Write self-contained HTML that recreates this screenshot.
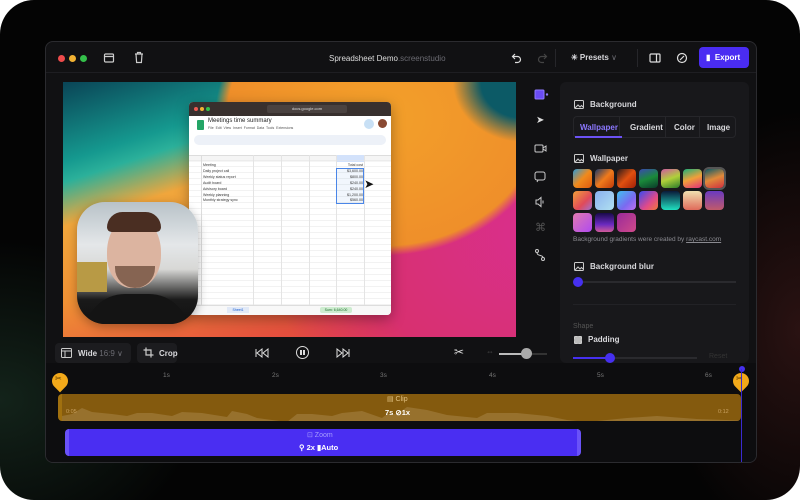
<!DOCTYPE html>
<html><head><meta charset="utf-8"><style>
*{box-sizing:border-box;margin:0;padding:0}
body{width:800px;height:500px;background:#fff;font-family:"Liberation Sans",sans-serif;overflow:hidden;position:relative}
.frame{position:absolute;left:0;top:0;width:800px;height:500px;border-radius:34px;overflow:hidden;
background:radial-gradient(ellipse 200px 160px at 0px 400px,#13231a 0%,rgba(0,0,0,0) 100%),radial-gradient(ellipse 140px 220px at 800px 330px,#2a1212 0%,rgba(0,0,0,0) 100%),#040404}
.win{position:absolute;left:45px;top:41px;width:712px;height:422px;background:#111113;border:1px solid #2b2b2f;border-radius:8px;overflow:hidden}
.abs{position:absolute}
.t{color:#d8d8dc;font-size:8px;font-weight:bold}
.dim{color:#6b6b72}
.canvas{left:17px;top:40px;width:453px;height:255px;overflow:hidden;
background:
radial-gradient(ellipse 70px 60px at 460px 0px,#0c5a66 0%,#0c5a66 60%,rgba(12,90,102,0) 100%),
radial-gradient(ellipse 200px 165px at 320px 35px,#f3a02a 0%,#ef8f2a 78%,rgba(238,141,42,0) 84%),
radial-gradient(ellipse 280px 230px at 480px 150px,#d92f8e 0%,#d83070 65%,rgba(216,48,112,0) 100%),
linear-gradient(162deg,#0a4456 0%,#15998f 20%,#2bb09a 25%,#f0a63c 36%,#ef9034 55%,#e5503e 80%,#d9343c 100%)}
.panel{left:514px;top:40px;width:189px;height:281px;background:#18181b;border-radius:6px}
.sw{position:absolute;width:19px;height:19px;border-radius:4px}
</style></head><body>
<div class="frame">
<div class="win">
 <div class="abs" style="left:0;top:0;width:712px;height:31px;border-bottom:1px solid #1e1e22"></div>
 <div class="abs" style="left:12px;top:13px;width:7px;height:7px;border-radius:50%;background:#ee4b4b"></div>
 <div class="abs" style="left:23px;top:13px;width:7px;height:7px;border-radius:50%;background:#f2b233"></div>
 <div class="abs" style="left:34px;top:13px;width:7px;height:7px;border-radius:50%;background:#34c04a"></div>
 <svg class="abs" style="left:57px;top:10px" width="12" height="12" viewBox="0 0 12 12" fill="none" stroke="#ccc" stroke-width="1.2"><rect x="1.5" y="2" width="9" height="8" rx="1"/><path d="M1.5 4.5h9"/></svg>
 <svg class="abs" style="left:87px;top:9px" width="12" height="13" viewBox="0 0 12 13" fill="none" stroke="#ccc" stroke-width="1.2"><path d="M2 3h8M4.5 3V1.5h3V3M3 3l.6 8.5h4.8L9 3"/></svg>
 <div class="abs t" style="left:283px;top:12px;font-weight:normal;color:#ddd">Spreadsheet Demo<span class="dim">.screenstudio</span></div>
 <svg class="abs" style="left:465px;top:10px" width="12" height="12" viewBox="0 0 12 12" fill="none" stroke="#ddd" stroke-width="1.2"><path d="M4 2L1.5 4.5 4 7M1.5 4.5h5a3 3 0 010 6H4"/></svg>
 <svg class="abs" style="left:490px;top:10px" width="12" height="12" viewBox="0 0 12 12" fill="none" stroke="#444" stroke-width="1.2"><path d="M8 2l2.5 2.5L8 7M10.5 4.5h-5a3 3 0 000 6H8"/></svg>
 <div class="abs" style="left:509px;top:7px;width:1px;height:18px;background:#26262a"></div>
 <div class="abs t" style="left:525px;top:11px;font-size:8px">✳ Presets <span class="dim" style="font-weight:normal">∨</span></div>
 <div class="abs" style="left:591px;top:7px;width:1px;height:18px;background:#26262a"></div>
 <svg class="abs" style="left:603px;top:10px" width="12" height="12" viewBox="0 0 12 12" fill="none" stroke="#ddd" stroke-width="1.2"><rect x="1" y="2" width="10" height="8" rx="1"/><path d="M7.5 2v8"/></svg>
 <svg class="abs" style="left:630px;top:10px" width="12" height="12" viewBox="0 0 12 12" fill="none" stroke="#ddd" stroke-width="1.2"><circle cx="6" cy="6" r="4.5"/><path d="M4 8l4-4"/></svg>
 <div class="abs" style="left:653px;top:5px;width:50px;height:21px;background:#4a2cf2;border-radius:4px;color:#fff;font-size:8px;font-weight:bold;line-height:21px;padding-left:7px">▮&nbsp; Export</div>

 <div class="abs canvas">
  <div class="abs" style="left:126px;top:20px;width:202px;height:213px;background:#fff;border-radius:4px;overflow:hidden;box-shadow:0 4px 14px rgba(0,0,0,.35)">
   <div class="abs" style="left:0;top:0;width:202px;height:14px;background:#38302e"></div>
   <div class="abs" style="left:5px;top:5px;width:4px;height:4px;border-radius:50%;background:#ee5a52"></div>
   <div class="abs" style="left:11px;top:5px;width:4px;height:4px;border-radius:50%;background:#f2b233"></div>
   <div class="abs" style="left:17px;top:5px;width:4px;height:4px;border-radius:50%;background:#34c04a"></div>
   <div class="abs" style="left:78px;top:3px;width:80px;height:8px;background:#4a4240;border-radius:2px;color:#ddd;font-size:4px;text-align:center;line-height:8px">docs.google.com</div>
   <div class="abs" style="left:8px;top:18px;width:7px;height:10px;background:#23a566;border-radius:1px"></div>
   <div class="abs" style="left:19px;top:16px;font-size:6px;color:#222">Meetings time summary</div>
   <div class="abs" style="left:19px;top:24px;font-size:3.5px;color:#555">File&nbsp; Edit&nbsp; View&nbsp; Insert&nbsp; Format&nbsp; Data&nbsp; Tools&nbsp; Extensions</div>
   <div class="abs" style="left:175px;top:17px;width:10px;height:10px;border-radius:50%;background:#c8e0f5"></div>
   <div class="abs" style="left:189px;top:17px;width:9px;height:9px;border-radius:50%;background:#8a4a33"></div>
   <div class="abs" style="left:5px;top:33px;width:192px;height:10px;background:#edf1f8;border-radius:5px"></div>
   <div class="abs" style="left:0;top:53px;width:202px;height:7px;background:#f5f5f5;border-top:1px solid #ddd"></div>
   <div class="abs" style="left:147px;top:53px;width:28px;height:7px;background:#d3e2fb"></div>
   <div class="abs" style="left:0;top:53px;width:202px;height:150px;background:repeating-linear-gradient(180deg,transparent 0 5.5px,#e4e4e4 5.5px 6px)"></div>
   <div class="abs" style="left:12px;top:53px;width:1px;height:150px;background:#ddd"></div>
   <div class="abs" style="left:64px;top:53px;width:1px;height:150px;background:#e4e4e4"></div>
   <div class="abs" style="left:92px;top:53px;width:1px;height:150px;background:#e4e4e4"></div>
   <div class="abs" style="left:120px;top:53px;width:1px;height:150px;background:#e4e4e4"></div>
   <div class="abs" style="left:147px;top:53px;width:1px;height:150px;background:#e4e4e4"></div>
   <div class="abs" style="left:175px;top:53px;width:1px;height:150px;background:#e4e4e4"></div>
   <div class="abs" style="left:147px;top:66px;width:28px;height:36px;border:1px solid #4a86e8;background:rgba(74,134,232,.08)"></div>
   <div class="abs" style="left:14px;top:61px;font-size:3.6px;line-height:5.9px;color:#333">Meeting<br>Daily project call<br>Weekly status report<br>Audit board<br>Advisory board<br>Weekly planning<br>Monthly strategy sync</div>
   <div class="abs" style="left:148px;top:61px;font-size:3.6px;line-height:5.9px;color:#333;width:26px;text-align:right">Total cost<br>$3,600.00<br>$800.00<br>$240.00<br>$240.00<br>$1,200.00<br>$560.00</div>
   <div class="abs" style="left:0;top:203px;width:202px;height:10px;background:#f8f8f8;border-top:1px solid #ddd"></div>
   <div class="abs" style="left:38px;top:205px;width:22px;height:6px;background:#e1e9f7;font-size:3.5px;color:#1a5fd1;text-align:center;line-height:6px">Sheet1</div>
   <div class="abs" style="left:131px;top:205px;width:32px;height:6px;background:#cdeccf;font-size:3.5px;color:#1a6a2a;text-align:center;line-height:6px;border-radius:2px">Sum: 6,640.00</div>
  </div>
  <div class="abs" style="left:301px;top:95px;color:#111;font-size:12px">➤</div>
  <div class="abs" style="left:14px;top:120px;width:121px;height:122px;border-radius:28px;overflow:hidden;box-shadow:0 3px 10px rgba(0,0,0,.3);background:linear-gradient(180deg,#b8c2c8 0%,#e4e7e9 35%,#d8d8d6 55%,#1a1a1a 80%,#111 100%)">
   <div class="abs" style="left:0;top:60px;width:30px;height:30px;background:#b89a45"></div>
   <div class="abs" style="left:30px;top:14px;width:54px;height:72px;border-radius:50% 50% 45% 45%;background:#dcb4a0"></div>
   <div class="abs" style="left:30px;top:10px;width:54px;height:20px;border-radius:27px 27px 8px 8px;background:#4a2e22"></div>
   <div class="abs" style="left:38px;top:64px;width:40px;height:22px;border-radius:0 0 20px 20px;background:#6a4a38;opacity:.75"></div>
   <div class="abs" style="left:8px;top:92px;width:104px;height:40px;border-radius:40px 40px 0 0;background:#141414"></div>
  </div>
 </div>

 <svg class="abs" style="left:488px;top:47px" width="16" height="12" viewBox="0 0 16 12"><rect x="1" y="1" width="9" height="9" rx="1" fill="#6a4cf5" stroke="#8f7aff"/><circle cx="13" cy="5.5" r="1.2" fill="#8f7aff"/></svg>
 <div class="abs" style="left:490px;top:73px;color:#ddd;font-size:10px">➤</div>
 <svg class="abs" style="left:488px;top:101px" width="13" height="11" viewBox="0 0 13 11" fill="none" stroke="#ccc"><rect x="1" y="2" width="8" height="7" rx="1"/><path d="M9 5l3-2v5l-3-2"/></svg>
 <svg class="abs" style="left:488px;top:129px" width="12" height="12" viewBox="0 0 12 12" fill="none" stroke="#ccc"><rect x="1" y="1" width="10" height="8" rx="2"/><path d="M4 9l-1 2"/></svg>
 <svg class="abs" style="left:488px;top:154px" width="12" height="12" viewBox="0 0 12 12" fill="none" stroke="#ccc"><path d="M2 4h2l3-2.5v9L4 8H2z"/><path d="M9 4.5v3"/></svg>
 <div class="abs" style="left:489px;top:179px;color:#555;font-size:11px">⌘</div>
 <svg class="abs" style="left:488px;top:206px" width="12" height="14" viewBox="0 0 12 14" fill="none" stroke="#ccc"><circle cx="3" cy="3" r="1.5"/><circle cx="9" cy="11" r="1.5"/><path d="M3 4.5c0 4 6 2 6 5"/></svg>

 <div class="abs panel">
  <svg class="abs" style="left:14px;top:18px" width="10" height="9" viewBox="0 0 10 9" fill="none" stroke="#ccc"><rect x=".5" y=".5" width="9" height="8" rx="1"/><path d="M1 8l3-3 2 2 1.5-1.5L9 7"/></svg>
  <div class="abs t" style="left:30px;top:18px">Background</div>
  <div class="abs" style="left:13px;top:34px;width:163px;height:22px;border:1px solid #26262a;border-radius:4px"></div>
  <div class="abs" style="left:59px;top:35px;width:1px;height:20px;background:#26262a"></div>
  <div class="abs" style="left:105px;top:35px;width:1px;height:20px;background:#26262a"></div>
  <div class="abs" style="left:139px;top:35px;width:1px;height:20px;background:#26262a"></div>
  <div class="abs" style="left:15px;top:54px;width:47px;height:2px;background:#6c52f5"></div>
  <div class="abs t" style="left:20px;top:41px;color:#8c78ff">Wallpaper</div>
  <div class="abs t" style="left:70px;top:41px">Gradient</div>
  <div class="abs t" style="left:114px;top:41px">Color</div>
  <div class="abs t" style="left:147px;top:41px">Image</div>
  <svg class="abs" style="left:14px;top:72px" width="10" height="9" viewBox="0 0 10 9" fill="none" stroke="#ccc"><rect x=".5" y=".5" width="9" height="8" rx="1"/><path d="M1 8l3-3 2 2 1.5-1.5L9 7"/></svg>
  <div class="abs t" style="left:30px;top:72px">Wallpaper</div>
  <div class="sw" style="left:13px;top:87px;background:linear-gradient(135deg,#2a9ad8,#f08a1c 50%,#e05a10)"></div>
  <div class="sw" style="left:35px;top:87px;background:linear-gradient(135deg,#1a3a6a,#f07a1c 50%,#c03a0a)"></div>
  <div class="sw" style="left:57px;top:87px;background:linear-gradient(135deg,#2a1a1a,#e05010 50%,#a02008)"></div>
  <div class="sw" style="left:79px;top:87px;background:linear-gradient(160deg,#3a4ab0,#1a8a3a 50%,#0a3a2a)"></div>
  <div class="sw" style="left:101px;top:87px;background:linear-gradient(160deg,#d05aa0,#b0d03a 50%,#2a7a2a)"></div>
  <div class="sw" style="left:123px;top:87px;background:linear-gradient(160deg,#1ab07a,#f0a03a 50%,#e0307a)"></div>
  <div class="sw" style="left:145px;top:87px;background:linear-gradient(160deg,#0a5a6a,#e08a3a 50%,#d03040);outline:2px solid #555"></div>
  <div class="sw" style="left:13px;top:109px;background:linear-gradient(135deg,#f0a03a,#e04a5a 60%,#a070d0)"></div>
  <div class="sw" style="left:35px;top:109px;background:linear-gradient(135deg,#8ab0f0,#b0e0f0)"></div>
  <div class="sw" style="left:57px;top:109px;background:linear-gradient(135deg,#40c0f0,#7a6af0 60%,#c070f0)"></div>
  <div class="sw" style="left:79px;top:109px;background:linear-gradient(135deg,#3a4af0,#e04a8a 60%,#f07a3a)"></div>
  <div class="sw" style="left:101px;top:109px;background:linear-gradient(180deg,#0a1a3a,#20e0c0)"></div>
  <div class="sw" style="left:123px;top:109px;background:linear-gradient(180deg,#f0e0b0,#e06a5a)"></div>
  <div class="sw" style="left:145px;top:109px;background:linear-gradient(180deg,#6a3ac0,#c05a6a)"></div>
  <div class="sw" style="left:13px;top:131px;background:linear-gradient(135deg,#e07ab0,#b04af0)"></div>
  <div class="sw" style="left:35px;top:131px;background:linear-gradient(180deg,#1a0a4a,#6a2ac0 60%,#d05a9a)"></div>
  <div class="sw" style="left:57px;top:131px;background:linear-gradient(135deg,#9a2a9a,#d04a8a)"></div>
  <div class="abs" style="left:13px;top:154px;font-size:6.5px;color:#8a8a90">Background gradients were created by <u>raycast.com</u></div>
  <svg class="abs" style="left:14px;top:180px" width="10" height="9" viewBox="0 0 10 9" fill="none" stroke="#ccc"><rect x=".5" y=".5" width="9" height="8" rx="1"/><path d="M1 8l3-3 2 2 1.5-1.5L9 7"/></svg>
  <div class="abs t" style="left:30px;top:180px">Background blur</div>
  <div class="abs" style="left:13px;top:199px;width:163px;height:2px;background:#2a2a2e"></div>
  <div class="abs" style="left:13px;top:195px;width:10px;height:10px;border-radius:50%;background:#4630f0"></div>
  <div class="abs" style="left:13px;top:222px;width:163px;height:1px;background:#222226"></div>
  <div class="abs" style="left:13px;top:241px;font-size:7px;color:#555">Shape</div>
  <div class="abs" style="left:14px;top:254px;width:8px;height:8px;border:1px dashed #ccc;background:#bbb;border-radius:1px"></div>
  <div class="abs t" style="left:28px;top:253px">Padding</div>
  <div class="abs" style="left:13px;top:275px;width:124px;height:2px;background:#2a2a2e"></div>
  <div class="abs" style="left:13px;top:275px;width:37px;height:2px;background:#4630f0"></div>
  <div class="abs" style="left:45px;top:271px;width:10px;height:10px;border-radius:50%;background:#4630f0"></div>
  <div class="abs" style="left:149px;top:271px;font-size:7px;color:#333">Reset</div>
 </div>

 <div class="abs" style="left:9px;top:301px;width:76px;height:20px;background:#1c1c1f;border-radius:4px"></div>
 <svg class="abs" style="left:15px;top:306px" width="11" height="10" viewBox="0 0 11 10" fill="none" stroke="#ccc"><rect x=".5" y=".5" width="10" height="9" rx="1"/><path d="M.5 3h10M4 3v6.5"/></svg>
 <div class="abs t" style="left:32px;top:307px">Wide <span class="dim" style="font-weight:normal">16:9 ∨</span></div>
 <div class="abs" style="left:91px;top:301px;width:40px;height:20px;background:#1c1c1f;border-radius:4px"></div>
 <svg class="abs" style="left:97px;top:305px" width="11" height="11" viewBox="0 0 11 11" fill="none" stroke="#ccc" stroke-width="1.2"><path d="M3 .5v7.5h7.5M.5 3H8v7.5"/></svg>
 <div class="abs t" style="left:113px;top:307px">Crop</div>
 <svg class="abs" style="left:209px;top:306px" width="14" height="10" viewBox="0 0 14 10" fill="none" stroke="#ddd"><path d="M1 1v8M7 1L2 5l5 4zM13 1L8 5l5 4z"/></svg>
 <div class="abs" style="left:250px;top:304px;width:13px;height:13px;border:1.5px solid #ddd;border-radius:50%"></div>
 <div class="abs" style="left:254px;top:308px;width:1.5px;height:5px;background:#ddd;box-shadow:3px 0 0 #ddd"></div>
 <svg class="abs" style="left:290px;top:306px" width="14" height="10" viewBox="0 0 14 10" fill="none" stroke="#ddd"><path d="M13 1v8M7 1l5 4-5 4zM1 1l5 4-5 4z"/></svg>
 <div class="abs" style="left:408px;top:303px;color:#ddd;font-size:12px">✂</div>
 <div class="abs" style="left:440px;top:305px;color:#555;font-size:8px">⇔</div>
 <div class="abs" style="left:453px;top:311px;width:48px;height:2px;background:#333"></div>
 <div class="abs" style="left:453px;top:311px;width:28px;height:2px;background:#bbb"></div>
 <div class="abs" style="left:475px;top:306px;width:11px;height:11px;border-radius:50%;background:#aaa"></div>

 <div class="abs" style="left:0;top:321px;width:712px;height:101px;background:#0d0d0f"></div>
 <div class="abs" style="left:117px;top:330px;font-size:6.5px;color:#777">1s</div>
 <div class="abs" style="left:226px;top:330px;font-size:6.5px;color:#777">2s</div>
 <div class="abs" style="left:334px;top:330px;font-size:6.5px;color:#777">3s</div>
 <div class="abs" style="left:443px;top:330px;font-size:6.5px;color:#777">4s</div>
 <div class="abs" style="left:551px;top:330px;font-size:6.5px;color:#777">5s</div>
 <div class="abs" style="left:659px;top:330px;font-size:6.5px;color:#777">6s</div>
 <div class="abs" style="left:6px;top:331px;width:16px;height:16px;background:#f2a91a;border-radius:50% 50% 50% 0;transform:rotate(-45deg)"></div>
 <div class="abs" style="left:9px;top:332px;font-size:8px;color:#5a3a00">✂</div>
 <div class="abs" style="left:687px;top:331px;width:16px;height:16px;background:#f2a91a;border-radius:50% 50% 50% 0;transform:rotate(-45deg)"></div>
 <div class="abs" style="left:690px;top:332px;font-size:8px;color:#5a3a00">✂</div>
 <div class="abs" style="left:693px;top:324px;width:6px;height:6px;border-radius:50%;background:#4630f0"></div>
 <div class="abs" style="left:695px;top:327px;width:1px;height:95px;background:#3a2ad0"></div>

 <div class="abs" style="left:12px;top:352px;width:683px;height:27px;background:#845a0e;border-radius:4px;overflow:hidden;border-left:4px solid #a0700f">
  <svg class="abs" style="left:0;top:0" width="683" height="27" viewBox="0 0 683 27" preserveAspectRatio="none"><path d="M0 27V22l10-2 10-6 10 4 20 2 15 2 10-3 15 0 20 3 10-4 20 1 25 4 5-6 15 3 10 4 30 4 10-8 15 0 20 2 10-3 20-2 20 7 5-4 10 0 10-7 20 3 20 5 30 3 10-5 30 0 30 3 20 4 20 2 40-4 30-2 40 3 60 2 55 0V27z" fill="#a07a3a" opacity=".7"/></svg>
  <div class="abs" style="left:325px;top:1px;font-size:7px;color:#e0c080">▤ Clip</div>
  <div class="abs" style="left:323px;top:14px;font-size:7.5px;color:#fff;font-weight:bold">7s ⊘1x</div>
  <div class="abs" style="left:4px;top:15px;font-size:5.5px;color:#c8a060">0:05</div>
  <div class="abs" style="left:656px;top:15px;font-size:5.5px;color:#c8a060">0:12</div>
 </div>
 <div class="abs" style="left:19px;top:387px;width:516px;height:27px;background:#4a2ef2;border-radius:4px;border-left:4px solid #6a52f8;border-right:4px solid #6a52f8">
  <div class="abs" style="left:238px;top:2px;font-size:7px;color:#a69cff">⊡ Zoom</div>
  <div class="abs" style="left:230px;top:14px;font-size:7.5px;color:#fff;font-weight:bold">⚲ 2x ▮Auto</div>
 </div>
</div>
</div>
</body></html>
